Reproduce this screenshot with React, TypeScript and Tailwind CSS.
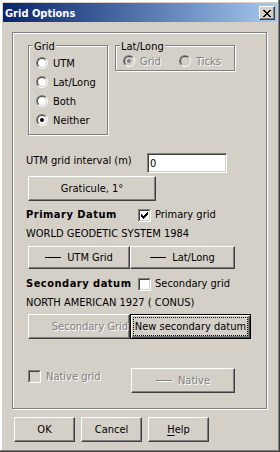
import React from "react";

const raised =
  "box-border border border-t-white border-l-white border-r-[#404040] border-b-[#404040] shadow-[inset_-1px_-1px_0_#808080]";
const sunken =
  "box-border border border-t-[#808080] border-l-[#808080] border-r-white border-b-white";
const dimText = "text-[#808080] [text-shadow:1px_1px_0_#fff]";

function Radio({ checked = false, disabled = false }: { checked?: boolean; disabled?: boolean }) {
  return (
    <div className="w-[12px] h-[12px] shrink-0 rounded-full box-border border border-t-[#808080] border-l-[#808080] border-r-white border-b-white">
      <div
        className={`w-full h-full rounded-full box-border border border-t-[#404040] border-l-[#404040] border-r-[#d4d0c8] border-b-[#d4d0c8] flex items-center justify-center ${
          disabled ? "bg-[#d4d0c8]" : "bg-white"
        }`}
      >
        {checked && <div className={`w-[4px] h-[4px] rounded-full ${disabled ? "bg-[#808080]" : "bg-black"}`} />}
      </div>
    </div>
  );
}

function Check({ checked = false, disabled = false }: { checked?: boolean; disabled?: boolean }) {
  return (
    <div className={`w-[13px] h-[13px] shrink-0 ${sunken}`}>
      <div
        className={`w-full h-full box-border border border-t-[#404040] border-l-[#404040] border-r-[#d4d0c8] border-b-[#d4d0c8] flex items-center justify-center ${
          disabled ? "bg-[#d4d0c8]" : "bg-white"
        }`}
      >
        {checked && (
          <svg width="7" height="7" viewBox="0 0 7 7" shapeRendering="crispEdges">
            {[2, 3, 4, 3, 2, 1, 0].map((y, x) => (
              <rect key={x} x={x} y={y} width="1" height="3" fill="#000" />
            ))}
          </svg>
        )}
      </div>
    </div>
  );
}

function GroupBox({ label, className, children }: { label: string; className: string; children: React.ReactNode }) {
  return (
    <div className={`relative box-border border border-[#808080] shadow-[inset_1px_1px_0_#fff,1px_1px_0_#fff] ${className}`}>
      <span className="absolute left-[4px] top-[-6px] px-[1px] bg-[#d4d0c8]">{label}</span>
      {children}
    </div>
  );
}

function LineMark({ dim = false, hidden = false }: { dim?: boolean; hidden?: boolean }) {
  if (hidden) return <span className="w-[16px] h-px" />;
  return <span className={`w-[16px] h-px ${dim ? "bg-[#808080] shadow-[1px_1px_0_#fff]" : "bg-black"}`} />;
}

export default function App() {
  return (
    <div className="w-[280px] h-[452px] box-border p-[3px] bg-[#d4d0c8] shadow-[inset_-1px_-1px_0_#404040,inset_-2px_-2px_0_#808080,inset_2px_2px_0_#fff] font-['DejaVu_Sans_Condensed','Liberation_Sans',Arial,sans-serif] text-[11px] leading-[13px] text-black flex flex-col">
      {/* title bar */}
      <div className="h-[19px] bg-linear-to-r from-[#0a246a] to-[#a6caf0] flex items-start pl-[2px] pr-[2px]">
        <span className="flex-1 pt-[4px] font-bold text-white">Grid Options</span>
        <div className={`mt-[3px] w-[16px] h-[14px] bg-[#d4d0c8] flex items-center justify-center ${raised}`}>
          <svg width="8" height="7" viewBox="0 0 8 7" shapeRendering="crispEdges">
            <path d="M0 0h2v1H0zM6 0h2v1H6zM1 1h2v1H1zM5 1h2v1H5zM2 2h4v1H2zM3 3h2v1H3zM2 4h4v1H2zM1 5h2v1H1zM5 5h2v1H5zM0 6h2v1H0zM6 6h2v1H6z" fill="#000" />
          </svg>
        </div>
      </div>

      {/* main group */}
      <div className="ml-[9px] mt-[10px] w-[255px] h-[377px] shrink-0 box-border border border-[#808080] shadow-[inset_1px_1px_0_#fff,1px_1px_0_#fff] pl-[15px] flex flex-col">
        <div className="mt-[12px] flex items-start">
          <GroupBox label="Grid" className="w-[80px] h-[90px] pt-[11px] pl-[7px] flex flex-col gap-[7px]">
            {["UTM", "Lat/Long", "Both", "Neither"].map((t) => (
              <div key={t} className="h-[12px] flex items-center gap-[5px]">
                <Radio checked={t === "Neither"} />
                <span>{t}</span>
              </div>
            ))}
          </GroupBox>
          <GroupBox label="Lat/Long" className="ml-[7px] w-[120px] h-[26px] pt-[9px] pl-[7px] flex items-start">
            <div className="w-[56px] h-[12px] flex items-center gap-[5px]">
              <Radio checked disabled />
              <span className={dimText}>Grid</span>
            </div>
            <div className="h-[12px] flex items-center gap-[5px]">
              <Radio disabled />
              <span className={dimText}>Ticks</span>
            </div>
          </GroupBox>
        </div>

        <div className="mt-[18px] flex items-start">
          <span className="-ml-[2px] w-[121px] mt-[1px]">UTM grid interval (m)</span>
          <div className={`w-[80px] h-[20px] bg-white pl-[2px] flex items-center shadow-[inset_1px_1px_0_#404040,inset_-1px_-1px_0_#d4d0c8] ${sunken}`}>
            0
          </div>
        </div>

        <div className={`mt-[3px] w-[128px] h-[25px] flex items-center justify-center ${raised}`}>Graticule, 1°</div>

        <div className="mt-[8px] h-[13px] flex items-start">
          <span className="-ml-[2px] w-[112px] -mt-[1px] font-bold tracking-[0.5px]">Primary Datum</span>
          <Check checked />
          <span className="ml-[4px] -mt-[1px]">Primary grid</span>
        </div>
        <div className="mt-[5px] -ml-[2px]">WORLD GEODETIC SYSTEM 1984</div>

        <div className="mt-[6px] flex">
          <div className={`w-[102px] h-[23px] flex items-center justify-center gap-[6px] ${raised}`}>
            <LineMark />
            <span>UTM Grid</span>
          </div>
          <div className={`w-[105px] h-[23px] flex items-center justify-center gap-[6px] ${raised}`}>
            <LineMark />
            <span>Lat/Long</span>
          </div>
        </div>

        <div className="mt-[9px] h-[13px] flex items-start">
          <span className="-ml-[2px] w-[112px] -mt-[1px] font-bold tracking-[0.5px]">Secondary datum</span>
          <Check />
          <span className="ml-[4px] -mt-[1px]">Secondary grid</span>
        </div>
        <div className="mt-[5px] -ml-[2px]">NORTH AMERICAN 1927 ( CONUS)</div>

        <div className="mt-[5px] flex">
          <div className={`w-[102px] h-[25px] flex items-center justify-center gap-[6px] whitespace-nowrap ${raised}`}>
            <LineMark hidden />
            <span className={dimText}>Secondary Grid</span>
          </div>
          <div className="w-[121px] h-[25px] box-border border border-black shadow-[inset_1px_1px_0_#fff,inset_-1px_-1px_0_#404040,inset_-2px_-2px_0_#808080] flex items-center justify-center whitespace-nowrap outline-1 outline-dotted outline-black outline-offset-[-4px]">
            New secondary datum
          </div>
        </div>

        <div className="mt-[29px] flex items-start">
          <div className="mt-[2px] w-[103px] h-[13px] flex items-center gap-[5px]">
            <Check disabled />
            <span className={dimText}>Native grid</span>
          </div>
          <div className={`w-[104px] h-[25px] flex items-center justify-center gap-[6px] ${raised}`}>
            <LineMark dim />
            <span className={dimText}>Native</span>
          </div>
        </div>
      </div>

      {/* dialog buttons */}
      <div className="mt-[8px] ml-[11px] flex gap-[6px]">
        <div className={`w-[61px] h-[25px] flex items-center justify-center ${raised}`}>OK</div>
        <div className={`w-[61px] h-[25px] flex items-center justify-center ${raised}`}>Cancel</div>
        <div className={`w-[61px] h-[25px] flex items-center justify-center ${raised}`}>
          <span>
            <span className="underline underline-offset-2">H</span>elp
          </span>
        </div>
      </div>
    </div>
  );
}
